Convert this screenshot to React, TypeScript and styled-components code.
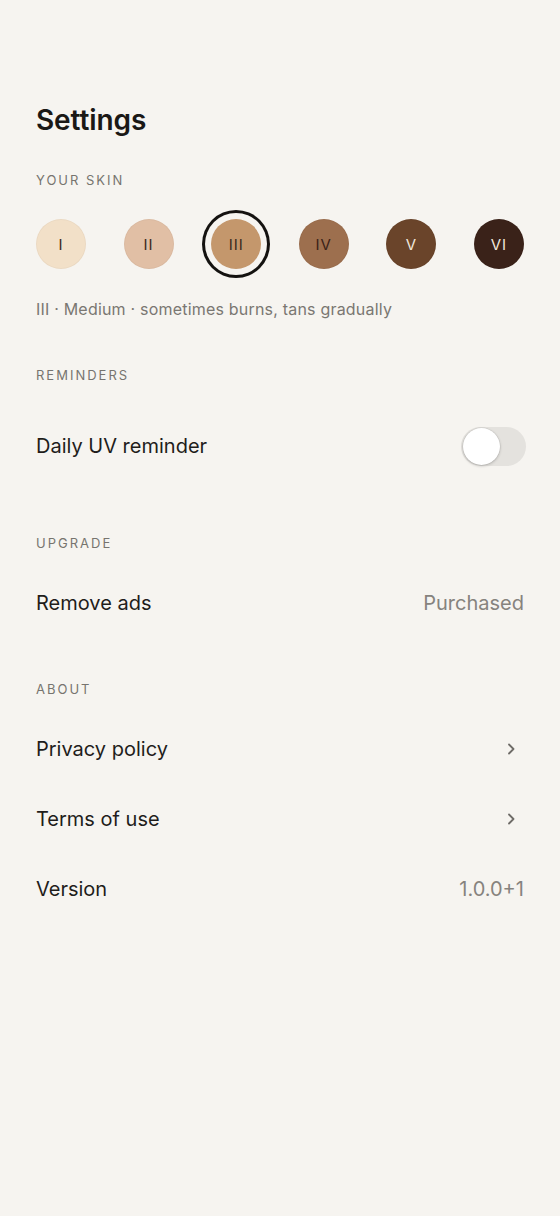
import React, { useState } from 'react';
import styled, { createGlobalStyle } from 'styled-components';

const GlobalStyle = createGlobalStyle`
    html, body {
        margin: 0;
        padding: 0;
        background: #f6f4f0;
    }
    body {
        font-family: Inter, "Noto Sans", sans-serif;
        color: #1c1a18;
        -webkit-font-smoothing: antialiased;
    }
`;

const Page = styled.div`
    min-height: 1216px;
    padding: 103px 36px 0;
    box-sizing: border-box;
    background: #f6f4f0;
`;

const Title = styled.h1`
    margin: 0;
    font-size: 28px;
    line-height: 34px;
    font-weight: 600;
    letter-spacing: -0.1px;
    color: #1a1816;
`;

const SectionLabel = styled.div<{ $top: number }>`
    margin-top: ${(p) => p.$top}px;
    margin-bottom: 17px;
    font-size: 13px;
    line-height: 16px;
    font-weight: 400;
    letter-spacing: 2px;
    color: #77746f;
    text-transform: uppercase;
`;

const SkinRow = styled.div`
    display: flex;
    justify-content: space-between;
    align-items: center;
    margin-top: 31px;
    height: 50px;
`;

const SkinDot = styled.button<{ $bg: string; $fg: string; $selected: boolean }>`
    width: 50px;
    height: 50px;
    border-radius: 50%;
    border: none;
    padding: 0;
    background: ${(p) => p.$bg};
    color: ${(p) => p.$fg};
    font-family: inherit;
    font-size: 15px;
    font-weight: 400;
    letter-spacing: 1px;
    display: flex;
    align-items: center;
    justify-content: center;
    box-shadow: ${(p) =>
        p.$selected ? '0 0 0 6px #f6f4f0, 0 0 0 9px #141210' : 'inset 0 0 0 1px rgba(0,0,0,0.03)'};
    cursor: pointer;
`;

const SkinNote = styled.p`
    margin: 30px 0 0;
    font-size: 16px;
    line-height: 20px;
    letter-spacing: 0.2px;
    color: #7a7772;
`;

const Row = styled.div<{ $tall?: boolean }>`
    display: flex;
    align-items: center;
    justify-content: space-between;
    height: ${(p) => (p.$tall ? 92 : 70)}px;
`;

const RowLabel = styled.span`
    font-size: 20px;
    color: #1f1d1b;
`;

const RowValue = styled.span`
    font-size: 20px;
    color: #86837e;
`;

const Track = styled.button<{ $on: boolean }>`
    width: 65px;
    height: 39px;
    margin-right: -2px;
    border-radius: 20px;
    border: none;
    padding: 2px;
    background: ${(p) => (p.$on ? '#1c1a18' : '#e4e2de')};
    display: flex;
    justify-content: ${(p) => (p.$on ? 'flex-end' : 'flex-start')};
    align-items: center;
    cursor: pointer;
`;

const Knob = styled.span`
    width: 37px;
    height: 37px;
    border-radius: 50%;
    background: #ffffff;
    box-shadow: 0 1px 3px rgba(0, 0, 0, 0.22), 0 0 0 0.5px rgba(0, 0, 0, 0.08);
`;

const Chevron = styled.svg`
    width: 14px;
    height: 14px;
    margin-right: 6px;
`;

const skins = [
    { n: 'I', bg: '#f2e0c8', fg: '#3a2a1e' },
    { n: 'II', bg: '#e1bfa5', fg: '#3a2a1e' },
    { n: 'III', bg: '#c4976c', fg: '#3a2a1e' },
    { n: 'IV', bg: '#9d6f4e', fg: '#3a2218' },
    { n: 'V', bg: '#6a442a', fg: '#f1e7dc' },
    { n: 'VI', bg: '#3a2219', fg: '#f1e7dc' },
];

const ChevronIcon = () => (
    <Chevron viewBox="0 0 14 14" fill="none">
        <path d="M5 2.5 L9.5 7 L5 11.5" stroke="#6f6c68" strokeWidth="1.8" strokeLinecap="round" strokeLinejoin="round" />
    </Chevron>
);

export default function App() {
    const [skin, setSkin] = useState(2);
    const [reminder, setReminder] = useState(false);

    return (
        <Page>
            <GlobalStyle />
            <Title>Settings</Title>

            <SectionLabel $top={35}>Your skin</SectionLabel>
            <SkinRow>
                {skins.map((s, i) => (
                    <SkinDot key={s.n} $bg={s.bg} $fg={s.fg} $selected={i === skin} onClick={() => setSkin(i)}>
                        {s.n}
                    </SkinDot>
                ))}
            </SkinRow>
            <SkinNote>III · Medium · sometimes burns, tans gradually</SkinNote>

            <SectionLabel $top={48}>Reminders</SectionLabel>
            <Row $tall>
                <RowLabel>Daily UV reminder</RowLabel>
                <Track $on={reminder} onClick={() => setReminder(!reminder)}>
                    <Knob />
                </Track>
            </Row>

            <SectionLabel $top={43}>Upgrade</SectionLabel>
            <Row>
                <RowLabel>Remove ads</RowLabel>
                <RowValue>Purchased</RowValue>
            </Row>

            <SectionLabel $top={43}>About</SectionLabel>
            <Row>
                <RowLabel>Privacy policy</RowLabel>
                <ChevronIcon />
            </Row>
            <Row>
                <RowLabel>Terms of use</RowLabel>
                <ChevronIcon />
            </Row>
            <Row>
                <RowLabel>Version</RowLabel>
                <RowValue>1.0.0+1</RowValue>
            </Row>
        </Page>
    );
}
